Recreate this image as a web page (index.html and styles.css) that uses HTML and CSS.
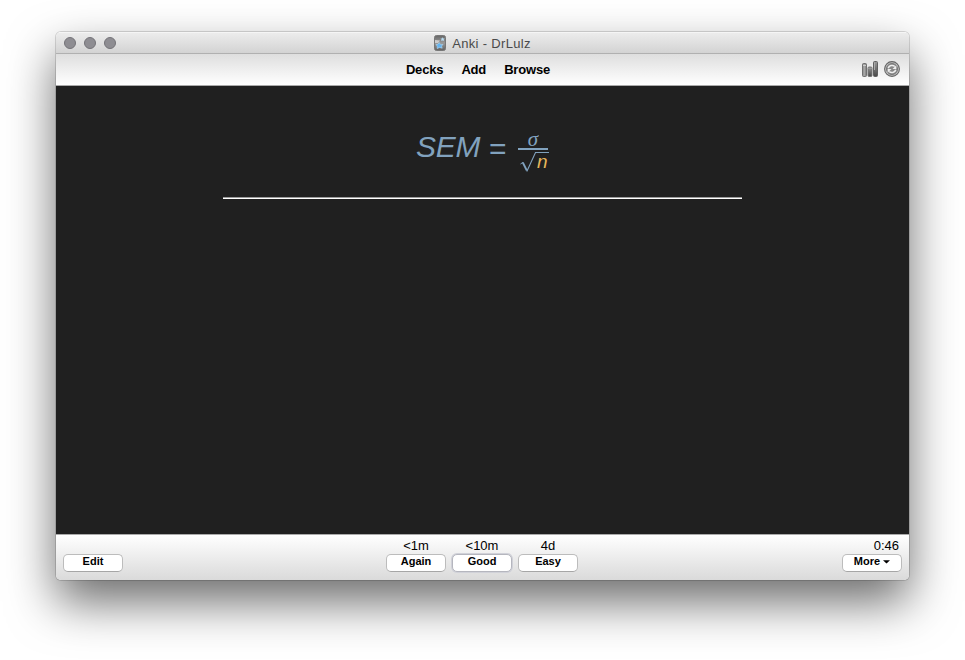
FILE: index.html
```html
<!DOCTYPE html>
<html lang="en">
<head>
<meta charset="utf-8">
<title>Anki - DrLulz</title>
<link rel="stylesheet" href="styles.css">
</head>
<body>
<div class="window">
  <header class="titlebar">
    <div class="lights"><i></i><i></i><i></i></div>
    <div class="title">
      <svg class="app-icon" width="12" height="16" viewBox="0 0 12 16">
        <defs><linearGradient id="app" x1="0" y1="0" x2="0" y2="1"><stop offset="0" stop-color="#666"/><stop offset=".5" stop-color="#999"/><stop offset="1" stop-color="#606060"/></linearGradient></defs>
        <rect x=".5" y=".5" width="11" height="15" rx="2" fill="url(#app)" stroke="#777"/>
        <path d="M1 5L6 5.5L4 8L1 8Z" fill="#ccc"/>
        <path d="M5.2 7.6L6.5 9.4L9 9.4L7.6 11L8.2 13.2L5.6 12.4L3.2 13.6L3.2 11L2 9.6L4 9.2Z" fill="#62b4f2" stroke="#b8daf0" stroke-width=".6"/>
        <path d="M8.6 2.2L9.3 3.5L10.7 3.6L9.7 4.7L10 6L8.6 5.5L7.2 6L7.5 4.6L6.4 3.6L8 3.5Z" fill="#b8dcf2"/>
      </svg>
      <span>Anki - DrLulz</span>
    </div>
  </header>
  <nav class="toolbar">
    <div class="links"><a>Decks</a><a>Add</a><a>Browse</a></div>
    <div class="tools">
      <svg width="16" height="16" viewBox="0 0 16 16">
        <defs><linearGradient id="bar" x1="0" y1="0" x2="1" y2="0"><stop offset="0" stop-color="#777"/><stop offset=".4" stop-color="#b0b0b0"/><stop offset="1" stop-color="#777"/></linearGradient><linearGradient id="bar2" x1="0" y1="0" x2="0" y2="1"><stop offset="0" stop-color="#999"/><stop offset="1" stop-color="#484848"/></linearGradient></defs>
        <rect x=".5" y="2.5" width="4" height="13" rx="1" fill="url(#bar)" stroke="#707070"/>
        <path d="M1 4.5H4" stroke="#ccc"/>
        <rect x="6" y="6" width="4" height="9.5" rx="1" fill="url(#bar2)" stroke="#777"/>
        <path d="M6 7.5H10" stroke="#999"/>
        <rect x="11.5" y=".5" width="4" height="15" rx="1" fill="url(#bar2)" stroke="#606060"/>
        <path d="M12.5 1.5V9" stroke="#aaa"/>
      </svg>
      <svg width="16" height="16" viewBox="0 0 16 16">
        <circle cx="8" cy="8" r="7.4" fill="#c4c4c4" stroke="#666" stroke-width="1.1"/>
        <circle cx="8" cy="8" r="5.5" fill="#888" stroke="#777"/>
        <path d="M4.2 7.2C5 4.4 8.8 3.6 10.8 5.5" fill="none" stroke="#eee" stroke-width="1.6"/>
        <path d="M12.3 4.2V8H8.5Z" fill="#eee"/>
        <path d="M11.8 8.8C11 11.6 7.2 12.4 5.2 10.5" fill="none" stroke="#eee" stroke-width="1.6"/>
        <path d="M3.7 11.8V8H7.5Z" fill="#eee"/>
      </svg>
    </div>
  </nav>
  <main class="card">
    <div class="formula">
      <span class="sem">SEM</span><span class="equals">=</span>
      <span class="fraction">
        <span class="sigma">σ</span>
        <span class="root"><svg width="29" height="22" viewBox="0 0 29 22"><path d="M.5 13L3 11.3" fill="none" stroke="#81a2be" stroke-width="1"/><path d="M2.8 11.5L6.8 19.5" stroke="#81a2be" stroke-width="1.8"/><path d="M6.8 20.5L15.5 1.5H29" fill="none" stroke="#81a2be" stroke-width="1.1"/></svg><span class="radicand">n</span></span>
      </span>
    </div>
    <hr>
  </main>
  <footer class="bottom">
    <div class="side"><span class="label"></span><button>Edit</button></div>
    <div class="answers">
      <div class="answer"><span class="label">&lt;1m</span><button>Again</button></div>
      <div class="answer"><span class="label">&lt;10m</span><button class="focus">Good</button></div>
      <div class="answer"><span class="label">4d</span><button>Easy</button></div>
    </div>
    <div class="side right"><span class="label">0:46</span><button>More <svg class="caret" width="7" height="4" viewBox="0 0 7 4"><path d="M0 .3H7L3.5 3.5Z"/></svg></button></div>
  </footer>
</div>
</body>
</html>
```
FILE: styles.css
```css
* { box-sizing: border-box; }
body {
  margin: 0;
  height: 660px;
  padding: 32px 56px 0;
  overflow: hidden;
  background: #fff;
  font-family: "Liberation Sans", Arial, sans-serif;
  color: #000;
}
.window {
  width: 853px;
  height: 548px;
  display: flex;
  flex-direction: column;
  border-radius: 5px;
  overflow: hidden;
  box-shadow: 0 0 0 1px rgba(0,0,0,.14), 0 22px 48px rgba(0,0,0,.58);
}
.titlebar {
  height: 22px;
  display: grid;
  grid-template-columns: 1fr auto 1fr;
  align-items: center;
  padding: 0 8px;
  background: linear-gradient(#ececec, #d3d3d3);
  border-top: 1px solid #f5f5f5;
  border-bottom: 1px solid #b0b0b0;
}
.lights { display: flex; gap: 8px; }
.lights i {
  width: 12px;
  height: 12px;
  border-radius: 50%;
  background: #8e8d92;
  border: 1px solid #747378;
}
.title {
  display: flex;
  align-items: center;
  gap: 6px;
  font-size: 13px;
  line-height: 16px;
  color: #4a4a4a;
}
.title span { letter-spacing: .32px; padding-top: 1px; }
.toolbar {
  height: 32px;
  flex: none;
  display: grid;
  grid-template-columns: 1fr auto 1fr;
  align-items: center;
  padding: 0 9px;
  background: linear-gradient(#dedede, #fff);
  border-bottom: 1px solid #aaa;
}
.links {
  grid-column: 2;
  display: flex;
  gap: 18px;
  margin-right: 9px;
  font-size: 13px;
  font-weight: bold;
  line-height: 16px;
  letter-spacing: -.17px;
}
.tools { display: flex; justify-content: flex-end; gap: 6px; padding-bottom: 2px; }
.card { flex: 1; background: #202020; color: #81a2be; }
.formula {
  height: 111px;
  padding: 43px 0 0 360px;
  display: flex;
  align-items: flex-start;
  font-style: italic;
}
.sem { width: 64px; font-size: 30px; line-height: 36px; letter-spacing: -.3px; }
.equals { width: 18px; font-size: 30px; line-height: 36px; margin: 2px 0 0 9px; font-style: normal; }
.fraction {
  width: 30px;
  margin: 3px 0 0 11px;
  display: flex;
  flex-direction: column;
}
.sigma {
  height: 18px;
  border-bottom: 2px solid #81a2be;
  text-align: center;
  font: italic 21px/14px "Liberation Serif", serif;
}
.root { display: grid; padding-left: 2px; margin-top: 1px; }
.root svg, .radicand { grid-area: 1 / 1; }
.radicand { font-size: 19px; line-height: 20px; padding: 1px 0 0 17px; color: #e6b85c; }
hr { width: 519px; height: 2px; margin: 0 auto; border: 0; background: #fff; border-top: 1px solid #9a9a9a; }
.bottom {
  height: 46px;
  flex: none;
  display: grid;
  grid-template-columns: 1fr auto 1fr;
  padding: 3px 7px 0;
  border-top: 1px solid #aaa;
  background: linear-gradient(#fff, #dadada);
}
.side, .answer { display: flex; flex-direction: column; align-items: flex-start; }
.right { align-items: flex-end; }
.right .label { padding-right: 3px; }
.answers { display: flex; gap: 6px; margin-right: 1px; }
.answer { align-items: center; }
.label { height: 16px; font-size: 13px; line-height: 15px; }
button {
  width: 60px;
  height: 18px;
  padding: 0 0 3px;
  border: 1px solid #bcbcbc;
  border-bottom-color: #a6a6a6;
  border-radius: 5px;
  background: #fff;
  color: #000;
  font: bold 11px/13px "Liberation Sans", Arial, sans-serif;
}
.focus { border: 1px solid #b5b6be; box-shadow: 0 0 0 1px #d0d1d8; }
.caret { vertical-align: 1px; }
```
